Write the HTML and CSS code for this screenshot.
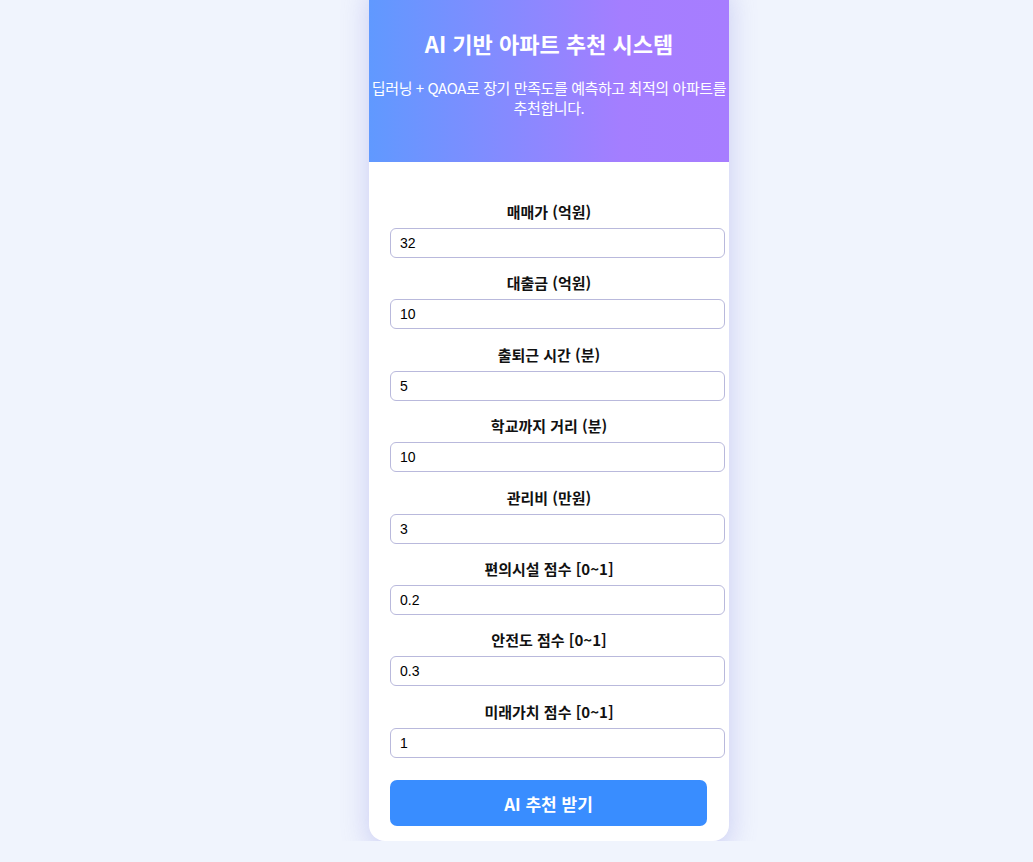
FILE: index.html
```html
<!DOCTYPE html>
<html lang="ko">
<head>
<meta charset="utf-8">
<title>AI 기반 아파트 추천 시스템</title>
<link rel="stylesheet" href="styles.css">
</head>
<body>
<div class="card">
  <div class="header">
    <h1 class="title">AI 기반 아파트 추천 시스템</h1>
    <p class="subtitle">딥러닝 + QAOA로 장기 만족도를 예측하고 최적의 아파트를 추천합니다.</p>
  </div>
  <form class="form">
    <div class="field"><label class="label">매매가 (억원)</label><input class="input" type="text" value="32"></div>
    <div class="field"><label class="label">대출금 (억원)</label><input class="input" type="text" value="10"></div>
    <div class="field"><label class="label">출퇴근 시간 (분)</label><input class="input" type="text" value="5"></div>
    <div class="field"><label class="label">학교까지 거리 (분)</label><input class="input" type="text" value="10"></div>
    <div class="field"><label class="label">관리비 (만원)</label><input class="input" type="text" value="3"></div>
    <div class="field"><label class="label">편의시설 점수 [0~1]</label><input class="input" type="text" value="0.2"></div>
    <div class="field"><label class="label">안전도 점수 [0~1]</label><input class="input" type="text" value="0.3"></div>
    <div class="field"><label class="label">미래가치 점수 [0~1]</label><input class="input" type="text" value="1"></div>
    <button class="button" type="button">AI 추천 받기</button>
  </form>
</div>
</body>
</html>
```

FILE: styles.css
```css
html, body {
  margin: 0;
  padding: 0;
}
body {
  background: #f0f4fd;
  font-family: "Noto Sans CJK KR", "Noto Sans", sans-serif;
  overflow: hidden;
}
.card {
  width: 360px;
  margin: -20px 0 0 369px;
  background: #ffffff;
  border-radius: 16px;
  overflow: hidden;
  box-shadow: 0 8px 28px rgba(110, 110, 220, 0.3);
}
.header {
  background: linear-gradient(90deg, #6099ff 0%, #a47eff 70%, #a77dff 100%);
  color: #ffffff;
  text-align: center;
  padding: 48px 0 0;
  height: 134px;
}
.title {
  margin: 0;
  font-size: 22px;
  font-weight: 700;
  line-height: 30px;
}
.subtitle {
  margin: 20px 0 0;
  font-size: 15px;
  line-height: 20px;
  letter-spacing: -0.4px;
}
.form {
  padding: 40px 0 15px 21px;
}
.field {
  display: flex;
  flex-direction: column;
  align-items: flex-start;
  margin-bottom: 15.4px;
}
.label {
  width: 360px;
  margin-left: -21px;
  text-align: center;
  font-size: 15px;
  font-weight: 700;
  line-height: 20px;
  color: #111;
  margin-bottom: 6px;
}
.input {
  box-sizing: border-box;
  width: 335px;
  height: 30px;
  padding: 0 9px;
  border: 1px solid #b9b9dc;
  border-radius: 6px;
  font-family: "Liberation Sans", Arial, sans-serif;
  font-size: 14px;
  color: #000;
  background: #fff;
  outline: none;
}
.button {
  display: block;
  margin-top: 22.6px;
  width: 317px;
  height: 46px;
  border: none;
  border-radius: 7px;
  background: #398dff;
  color: #ffffff;
  font-family: "Noto Sans CJK KR", "Noto Sans", sans-serif;
  font-size: 17px;
  font-weight: 700;
  cursor: pointer;
}
```
